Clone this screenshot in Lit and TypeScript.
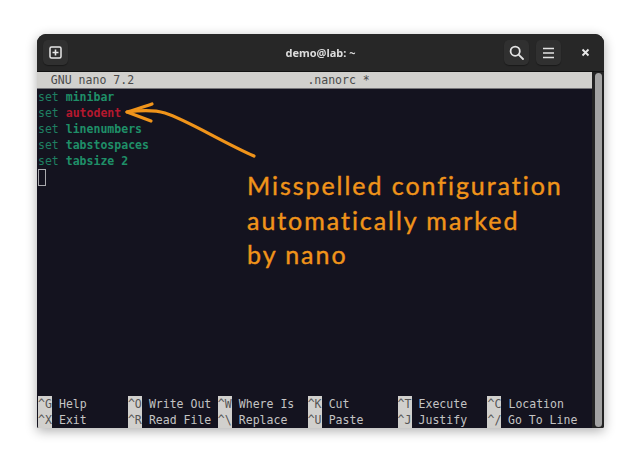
import { LitElement, html, css, svg } from "lit";
import { customElement } from "lit/decorators.js";

const lines: [string, boolean][] = [
  ["minibar", false],
  ["autodent", true],
  ["linenumbers", false],
  ["tabstospaces", false],
  ["tabsize 2", false],
];

const shortcuts: [string, string][] = [
  ["^G", "Help"],
  ["^O", "Write Out"],
  ["^W", "Where Is"],
  ["^K", "Cut"],
  ["^T", "Execute"],
  ["^C", "Location"],
  ["^X", "Exit"],
  ["^R", "Read File"],
  ["^\\", "Replace"],
  ["^U", "Paste"],
  ["^J", "Justify"],
  ["^/", "Go To Line"],
];

const statusText = "  GNU nano 7.2" + " ".repeat(25) + ".nanorc *";

@customElement("app-root")
export class AppRoot extends LitElement {
  static styles = css`
    :host {
      display: block;
      width: 640px;
      height: 467px;
      box-sizing: border-box;
      padding: 34px 36px 39px 37px;
      background: #fff;
      overflow: hidden;
    }
    .window {
      position: relative;
      width: 567px;
      height: 394px;
      display: flex;
      flex-direction: column;
      border-radius: 9px 9px 2px 2px;
      overflow: hidden;
      background: #1c1c1c;
      box-shadow: 0 3px 12px rgba(0, 0, 0, 0.32);
      filter: blur(0.35px);
    }
    .header {
      height: 37px;
      flex: none;
      display: grid;
      grid-template-columns: 1fr auto 1fr;
      align-items: center;
      padding: 0 6px;
      background: #272727;
      border-bottom: 1px solid #111;
    }
    .btn {
      width: 25px;
      height: 25px;
      flex: none;
      display: flex;
      align-items: center;
      justify-content: center;
      border-radius: 5px;
      background: #303030;
      box-shadow: 0 1px 1px rgba(0, 0, 0, 0.35);
    }
    .btn svg,
    .close svg {
      display: block;
    }
    .title {
      font: 700 11px "Noto Sans", sans-serif;
      color: #dcdcdc;
    }
    .actions {
      display: flex;
      align-items: center;
      justify-content: flex-end;
      gap: 7px;
    }
    .close {
      width: 30px;
      display: flex;
      justify-content: center;
      padding-left: 4px;
      box-sizing: border-box;
    }
    .body {
      flex: 1;
      min-height: 0;
      display: flex;
    }
    .term {
      flex: 1;
      min-width: 0;
      display: flex;
      flex-direction: column;
      background: #14131f;
      font: 11.53px/16px "DejaVu Sans Mono", monospace;
      color: #c4c4c4;
    }
    .status {
      height: 16px;
      flex: none;
      white-space: pre;
      background: #d1d0cd;
      color: #4a4a4a;
      border-bottom: 1px solid #77767a;
    }
    .lines {
      flex: 1;
      padding-left: 1px;
    }
    .line {
      height: 16px;
      white-space: pre;
      color: #1f7f62;
    }
    .line b {
      color: #1f8f68;
      font-weight: 700;
    }
    .line b.bad {
      color: #b4182e;
    }
    .cursor {
      width: 8px;
      height: 17px;
      box-sizing: border-box;
      border: 1px solid #a9a9ad;
    }
    .keys {
      flex: none;
      display: grid;
      grid-template-columns: repeat(6, 89.9px);
      grid-auto-rows: 16px;
      padding-left: 1px;
    }
    .item {
      display: flex;
      white-space: pre;
    }
    .key {
      width: 14px;
      margin-right: 7px;
      background: #d1d0cd;
      color: #555;
      overflow: hidden;
    }
    .scroll {
      width: 12px;
      flex: none;
      box-sizing: border-box;
      padding: 1px 2px 1px 2.5px;
      background: #232323;
    }
    .thumb {
      height: 100%;
      border-radius: 4px;
      background: #a3a3a3;
    }
    .arrow {
      position: absolute;
      left: 0;
      top: 0;
      pointer-events: none;
    }
    .note {
      position: absolute;
      left: 210px;
      top: 134px;
      font: 400 25px/34.5px "Lato", sans-serif;
      letter-spacing: 1.95px;
      -webkit-text-stroke: 0.4px #f0941a;
      color: #f0941a;
      white-space: pre;
    }
  `;

  render() {
    return html`
      <div class="window">
        <div class="header">
          <div class="btn">
            <svg width="13" height="13" viewBox="0 0 13 13">
              <rect x="1" y="1" width="11" height="11" rx="1.5" fill="none" stroke="#e8e8e8" stroke-width="1.5" />
              <path d="M6.5 3.5v6M3.5 6.5h6" stroke="#e8e8e8" stroke-width="1.6" fill="none" />
            </svg>
          </div>
          <div class="title">demo@lab: ~</div>
          <div class="actions">
            <div class="btn">
              <svg width="15" height="15" viewBox="0 0 15 15" fill="none" stroke="#e2e2e2" stroke-width="1.8">
                <circle cx="6.2" cy="6.2" r="4.6" />
                <path d="M9.6 9.6l4.4 4.4" stroke-linecap="round" />
              </svg>
            </div>
            <div class="btn">
              <svg width="13" height="12" viewBox="0 0 13 12" stroke="#e2e2e2" stroke-width="1.7">
                <path d="M1 1.5h11M1 6h11M1 10.5h11" />
              </svg>
            </div>
            <div class="close">
              <svg width="9" height="9" viewBox="0 0 9 9" stroke="#e6e6e6" stroke-width="1.9">
                <path d="M1.5 1.5l6 6M7.5 1.5l-6 6" />
              </svg>
            </div>
          </div>
        </div>
        <div class="body">
          <div class="term">
            <div class="status">${statusText}</div>
            <div class="lines">
              ${lines.map(
                ([t, bad]) => html`<div class="line">set <b class=${bad ? "bad" : ""}>${t}</b></div>`
              )}
              <div class="cursor"></div>
            </div>
            <div class="keys">
              ${shortcuts.map(
                ([k, l]) => html`<div class="item"><span class="key">${k}</span><span>${l}</span></div>`
              )}
            </div>
          </div>
          <div class="scroll"><div class="thumb"></div></div>
        </div>
        <svg class="arrow" width="567" height="394" viewBox="0 0 567 394" fill="none" stroke="#f0941a" stroke-width="3.2" stroke-linecap="round" stroke-linejoin="round">
          ${svg`<path d="M90 78C105 76 118 76 128 79C150 86 185 108 217 122" />
          <path d="M115 70C107 73 99 75 90 78C98 81 106 84 114 87" />`}
        </svg>
        <div class="note">Misspelled configuration
automatically marked
by nano</div>
      </div>
    `;
  }
}
